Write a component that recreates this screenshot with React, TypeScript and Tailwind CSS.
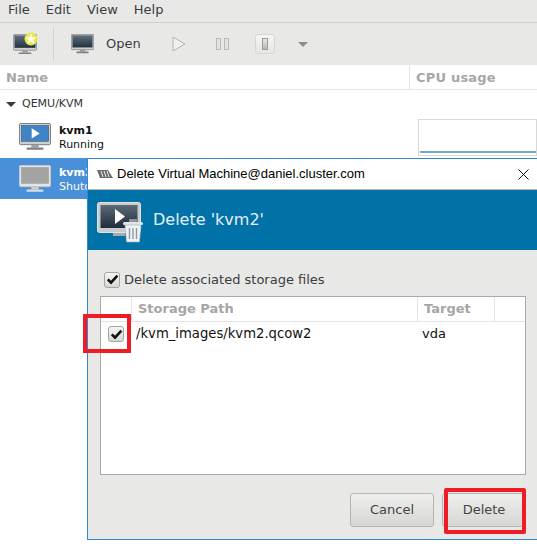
const dv = "font-['DejaVu_Sans',sans-serif]";

function Monitor({ size = 36, kind = "dark" }: { size?: number; kind?: "dark" | "play" | "gray" | "blue" }) {
  const screen = kind === "gray" ? "#a3a3a3" : kind === "blue" ? "#3f84c4" : "url(#scr)";
  const frame = kind === "gray" ? "#e4e4e4" : "#cfd0d0";
  return (
    <svg width={size} height={size * 0.87} viewBox="0 0 34 29.5" className="shrink-0">
      <defs>
        <linearGradient id="scr" x1="0" y1="0" x2="0" y2="1">
          <stop offset="0" stopColor="#5f6d7d" />
          <stop offset="1" stopColor="#243140" />
        </linearGradient>
      </defs>
      <rect x="0.5" y="0.5" width="33" height="22.5" rx="1.5" fill={frame} stroke={kind === "gray" ? "#c8c8c8" : "#77797b"} />
      <rect x="2.5" y="2.5" width="29" height="17" fill={screen} stroke={kind === "gray" ? "#999" : "#3a4450"} strokeWidth="0.5" />
      <rect x="13" y="23.5" width="8" height="2.5" fill={kind === "gray" ? "#d0d0d0" : "#9a9c9e"} />
      <rect x="8" y="26" width="18" height="2.5" rx="1" fill={kind === "gray" ? "#dcdcdc" : "#7d7f81"} />
      {kind === "blue" && <path d="M13.5 5.5 L22 11 L13.5 16.5 Z" fill="#fff" />}
    </svg>
  );
}

function CheckBox({ className = "" }: { className?: string }) {
  return (
    <span className={`flex h-[16px] w-[16px] items-center justify-center rounded-[3px] border border-[#a5a5a3] bg-gradient-to-b from-[#f6f6f5] to-[#d8d8d7] ${className}`}>
      <svg width="13" height="11" viewBox="0 0 13 11">
        <path d="M1.8 5.4 L5 8.6 L11.4 1.6" fill="none" stroke="#111" strokeWidth="2.6" />
      </svg>
    </span>
  );
}

function Btn({ children }: { children: string }) {
  return (
    <div className="flex h-[34px] w-[84px] items-center justify-center rounded-[3px] border border-[#b4b4b2] bg-gradient-to-b from-[#efefee] to-[#d6d6d5] text-[13px] text-[#444]">
      {children}
    </div>
  );
}

export default function App() {
  return (
    <div className={`relative h-[544px] w-[537px] overflow-hidden bg-white text-[13px] text-[#2e3436] ${dv}`}>
      <div className="flex h-[23px] items-center gap-[16px] border-b border-[#cfcfcd] bg-[#e8e8e7] pl-2 pb-[2px] text-[#3a3d3e]">
        <span>File</span>
        <span>Edit</span>
        <span>View</span>
        <span>Help</span>
      </div>

      <div className="flex h-[42px] items-center bg-[#e8e8e7]">
        <div className="relative ml-[13px]">
          <Monitor size={24} />
          <svg width="14" height="14" viewBox="0 0 14 14" className="absolute -right-[1px] -top-[2px]">
            <circle cx="7" cy="7" r="6.5" fill="#e9e64a" />
            <path d="M7 1.5 L8.6 5.2 L12.5 5.5 L9.5 8 L10.5 12 L7 9.8 L3.5 12 L4.5 8 L1.5 5.5 L5.4 5.2 Z" fill="#fffde8" />
          </svg>
        </div>
        <div className="ml-[16px] h-[34px] w-px bg-[#d2d2d0]" />
        <div className="ml-[17px]"><Monitor size={23} /></div>
        <span className="ml-[12px] text-[#3a3d3e]">Open</span>
        <svg width="14" height="16" viewBox="0 0 14 16" className="ml-[31px]">
          <path d="M1 1 L13 8 L1 15 Z" fill="#efefee" stroke="#b3b3b1" />
        </svg>
        <svg width="13" height="12" viewBox="0 0 13 12" className="ml-[30px]">
          <rect x="0.5" y="0.5" width="4" height="11" fill="#e4e4e3" stroke="#b8b8b6" />
          <rect x="8.5" y="0.5" width="4" height="11" fill="#e4e4e3" stroke="#b8b8b6" />
        </svg>
        <div className="ml-[26px] flex h-5 w-5 items-center justify-center rounded-[3px] border border-[#d5d5d3] bg-gradient-to-b from-[#f5f5f4] to-[#e6e6e5]">
          <div className="h-[12px] w-[6px] border border-[#9a9a98] bg-gradient-to-b from-[#e8e8e7] to-[#b5b5b3]" />
        </div>
        <div className="ml-[23px] h-0 w-0 border-x-[5px] border-t-[5px] border-x-transparent border-t-[#8d8d8b]" />
      </div>

      <div className="flex h-[25px] border-b border-[#e3e3e2] bg-white text-[13px] font-bold text-[#a5a7a7]">
        <div className="w-[410px] border-r border-[#e3e3e2] pl-[6px] pt-[3px]">Name</div>
        <div className="flex-1 pl-[6px] pt-[3px] tracking-[0.2px]">CPU usage</div>
      </div>

      <div className="flex h-[26px] items-center pl-[6px] pt-[2px] text-[11px] text-[#2e3436]">
        <div className="h-0 w-0 border-x-[5px] border-t-[5px] border-x-transparent border-t-[#3a3a3a]" />
        <span className="ml-[6px]">QEMU/KVM</span>
      </div>

      <div className="relative flex h-[42px] items-center pl-[19px]">
        <Monitor size={32} kind="blue" />
        <div className="ml-[8px] pt-[2px] text-[11px] leading-[14px] text-[#111]">
          <div className="font-bold">kvm1</div>
          <div>Running</div>
        </div>
        <div className="absolute left-[418px] top-[3px] h-[37px] w-[119px] border border-[#d8d8d6] bg-white">
          <div className="absolute bottom-[2px] left-[1px] right-0 h-[2px] bg-[#76a9c2]" />
        </div>
      </div>

      <div className="flex h-[41px] items-center bg-[#4a90d9] pl-[19px] text-white">
        <Monitor size={32} kind="gray" />
        <div className="ml-[8px] pt-[2px] text-[11px] leading-[14px]">
          <div className="font-bold">kvm2</div>
          <div>Shutoff</div>
        </div>
      </div>

      {/* dialog window */}
      <div className="absolute left-[87px] top-[158px] flex h-[382px] w-[450px] flex-col border-b border-l border-t border-[#2b88d8] bg-[#e8e8e7]">
        <div className="flex h-[31px] shrink-0 items-center border-b border-[#b5b5b5] bg-white pl-[9px] font-['Liberation_Sans',sans-serif] text-[13px] text-black">
          <svg width="16" height="10" viewBox="0 0 16 10" className="shrink-0">
            <path d="M0 1 H11 L16 9 H3 Z" fill="#6b6b6b" />
            <path d="M4 2 L6 8 M7 2 L9 8 M10 2 L12 8" stroke="#eee" strokeWidth="1" />
          </svg>
          <span className="ml-[4px]">Delete Virtual Machine@daniel.cluster.com</span>
          <svg width="11" height="11" viewBox="0 0 11 11" className="ml-auto mr-[8px]">
            <path d="M0.5 0.5 L10.5 10.5 M10.5 0.5 L0.5 10.5" stroke="#111" strokeWidth="1" />
          </svg>
        </div>

        <div className="flex h-[60px] shrink-0 items-center bg-[#0072a8] pl-[9px] text-white">
          <div className="relative">
            <svg width="44" height="36" viewBox="0 0 44 36">
              <defs>
                <linearGradient id="dscr" x1="0" y1="0" x2="0" y2="1">
                  <stop offset="0" stopColor="#5d6a78" />
                  <stop offset="1" stopColor="#202c38" />
                </linearGradient>
              </defs>
              <rect x="0.5" y="0.5" width="43" height="30" rx="2" fill="#c9cccc" stroke="#e2e4e4" />
              <rect x="3.5" y="3" width="37" height="23" fill="url(#dscr)" />
              <path d="M18 7 L28 14.5 L18 22 Z" fill="#fff" />
              <rect x="16" y="31" width="12" height="3" fill="#a8aaac" />
            </svg>
            <svg width="20" height="25" viewBox="0 0 20 25" className="absolute left-[26px] top-[16px]">
              <rect x="0" y="4" width="20" height="3" rx="1.5" fill="#dfe5e9" />
              <rect x="6" y="1" width="8" height="3" rx="1" fill="#8c98a1" />
              <path d="M2 7 H18 L16.5 24 H3.5 Z" fill="#eef2f4" stroke="#9fb0bc" strokeWidth="0.6" />
              <path d="M6.5 10 V21 M10 10 V21 M13.5 10 V21" stroke="#8d9aa4" strokeWidth="1.4" />
            </svg>
          </div>
          <span className="ml-[12px] text-[16px] text-[#e6eff5]">Delete 'kvm2'</span>
        </div>

        <div className="flex flex-1 flex-col px-[12px] pt-[21px]">
          <div className="flex h-[17px] items-center pl-[4px]">
            <CheckBox />
            <span className="ml-[4px] text-[#3a3d3e]">Delete associated storage files</span>
          </div>

          <div className="mt-[8px] h-[179px] w-[426px] border border-[#a9a9a7] bg-white">
            <div className="flex h-[25px] border-b border-[#e3e3e2] font-bold text-[#a5a7a7]">
              <div className="w-[31px] border-r border-[#e3e3e2]" />
              <div className="w-[286px] border-r border-[#e3e3e2] pl-[6px] pt-[2px]">Storage Path</div>
              <div className="w-[77px] border-r border-[#e3e3e2] pl-[6px] pt-[2px]">Target</div>
            </div>
            <div className="flex h-[24px] items-center text-[#111]">
              <div className="flex w-[31px] justify-start pl-[7px]"><CheckBox /></div>
              <span className="w-[287px] pl-[4px] text-[13.2px]">/kvm_images/kvm2.qcow2</span>
              <span className="pl-[3px]">vda</span>
            </div>
          </div>

          <div className="mt-[18px] -mr-[1px] flex justify-end gap-[8px]">
            <Btn>Cancel</Btn>
            <Btn>Delete</Btn>
          </div>
        </div>
      </div>

      {/* red annotations */}
      <div className="absolute left-[83px] top-[314px] h-[39px] w-[48px] border-[4px] border-[#ee1c25]" />
      <div className="absolute left-[444px] top-[488px] h-[46px] w-[82px] rounded-[2px] border-[4px] border-[#ee1c25]" />
    </div>
  );
}
